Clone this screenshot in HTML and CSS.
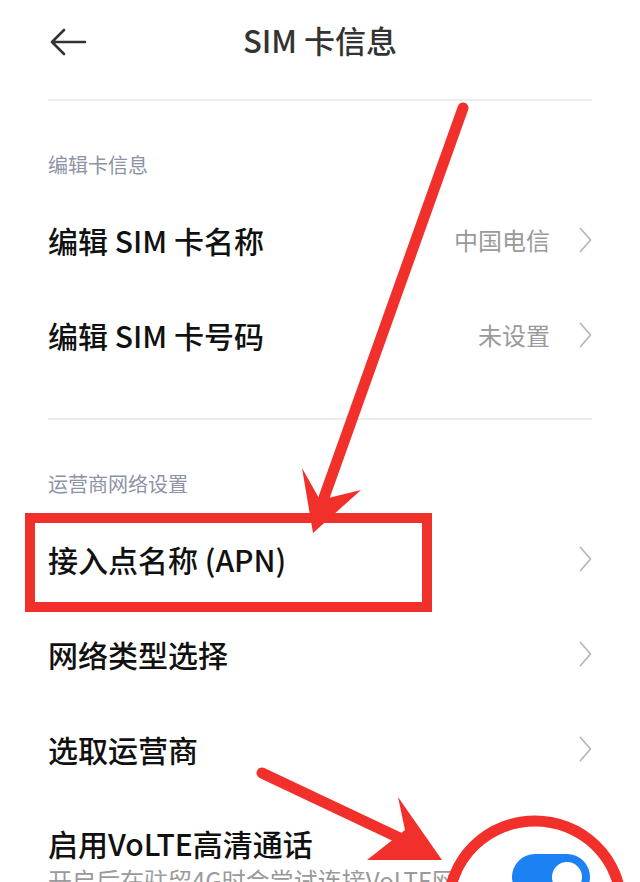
FILE: index.html
```html
<!DOCTYPE html>
<html lang="zh-CN">

<head>
    <meta charset="UTF-8">
    <meta name="viewport" content="width=device-width, initial-scale=1.0">
    <title>SIM 卡信息</title>
    <link rel="stylesheet" href="styles.css">
</head>

<body>
    <div class="screen">
        <header class="topbar">
            <svg class="back" viewBox="0 0 38 30" width="38" height="30">
                <path d="M36 15 H3 M15 3 L3 15 L15 27" fill="none" stroke="#333" stroke-width="2.6" stroke-linecap="round" stroke-linejoin="round" />
            </svg>
            <h1>SIM 卡信息</h1>
        </header>

        <div class="divider"></div>

        <div class="section-label">编辑卡信息</div>
        <div class="row">
            <span class="row-title">编辑 SIM 卡名称</span>
            <span class="row-value">中国电信</span>
            <svg class="chevron" viewBox="0 0 13 26" width="13" height="26"><path d="M1.5 1.5 L11.5 13 L1.5 24.5" /></svg>
        </div>
        <div class="row">
            <span class="row-title">编辑 SIM 卡号码</span>
            <span class="row-value">未设置</span>
            <svg class="chevron" viewBox="0 0 13 26" width="13" height="26"><path d="M1.5 1.5 L11.5 13 L1.5 24.5" /></svg>
        </div>

        <div class="divider divider-mid"></div>

        <div class="section-label">运营商网络设置</div>
        <div class="row">
            <span class="row-title">接入点名称 (APN)</span>
            <svg class="chevron" viewBox="0 0 13 26" width="13" height="26"><path d="M1.5 1.5 L11.5 13 L1.5 24.5" /></svg>
        </div>
        <div class="row">
            <span class="row-title">网络类型选择</span>
            <svg class="chevron" viewBox="0 0 13 26" width="13" height="26"><path d="M1.5 1.5 L11.5 13 L1.5 24.5" /></svg>
        </div>
        <div class="row">
            <span class="row-title">选取运营商</span>
            <svg class="chevron" viewBox="0 0 13 26" width="13" height="26"><path d="M1.5 1.5 L11.5 13 L1.5 24.5" /></svg>
        </div>
        <div class="row row-switch">
            <div class="row-text">
                <div class="row-title">启用VoLTE高清通话</div>
                <div class="row-sub">开启后在驻留4G时会尝试连接VoLTE网络，提升通话质量</div>
            </div>
            <div class="toggle"><span class="knob"></span></div>
        </div>

        <!-- red annotations drawn over the screenshot -->
        <svg class="marks" viewBox="0 0 640 882" width="640" height="882">
            <g fill="none" stroke="#f2302b" stroke-linecap="round">
                <line x1="463" y1="108" x2="321" y2="506" stroke-width="11" />
                <rect x="30" y="518" width="397" height="89" stroke-width="10" stroke-linecap="butt" />
                <line x1="262" y1="773" x2="408" y2="842" stroke-width="11" />
                <ellipse cx="535" cy="905" rx="86" ry="84" stroke-width="11" />
            </g>
            <g fill="#f2302b">
                <polygon points="313,533 302,468 320,500 361,490" />
                <polygon points="442,860 398,797 405,830 367,860" />
            </g>
        </svg>
    </div>
</body>

</html>
```

FILE: styles.css
```css
* {
    box-sizing: border-box;
}

body {
    margin: 0;
    background-color: #fff;
    font-family: "Noto Sans CJK SC", "Noto Sans", sans-serif;
    color: #111;
}

.screen {
    position: relative;
    width: 640px;
    height: 882px;
    overflow: hidden;
    padding: 0 48px;
}

.topbar {
    position: relative;
    height: 80px;
    display: flex;
    align-items: center;
    justify-content: center;
}

.topbar .back {
    position: absolute;
    left: 1px;
    top: 27px;
}

.topbar h1 {
    margin: 0;
    font-size: 31px;
    font-weight: 500;
    color: #333;
    line-height: 40px;
}

.divider {
    height: 2px;
    background-color: #ececec;
    margin-top: 19px;
}

.divider-mid {
    margin-top: 36px;
}

.section-label {
    margin-top: 49px;
    line-height: 30px;
    font-size: 20px;
    color: #8c93a6;
}

.section-label + .row {
    margin-top: 12px;
}

.row {
    height: 95px;
    display: flex;
    align-items: center;
}

.row-title {
    flex: 1;
    font-size: 30px;
    font-weight: 500;
    line-height: 40px;
    color: #111;
}

.row-value {
    font-size: 24px;
    color: #9a9a9a;
    margin-right: 29px;
}

.chevron {
    fill: none;
    stroke: #b8b8b8;
    stroke-width: 1.8;
    stroke-linecap: round;
    stroke-linejoin: round;
}

.row-switch {
    height: auto;
    align-items: center;
    padding-top: 27px;
}

.row-text {
    flex: 1;
    max-width: 412px;
}

.row-sub {
    font-size: 24px;
    line-height: 34px;
    color: #9a9a9a;
}

.toggle {
    margin-left: auto;
    margin-right: 2px;
    width: 78px;
    height: 46px;
    border-radius: 23px;
    background-color: #1c82f4;
    position: relative;
}

.toggle .knob {
    position: absolute;
    right: 8px;
    top: 8px;
    width: 30px;
    height: 30px;
    border-radius: 50%;
    background-color: #fff;
}

.marks {
    position: absolute;
    left: 0;
    top: 0;
    pointer-events: none;
}
```
